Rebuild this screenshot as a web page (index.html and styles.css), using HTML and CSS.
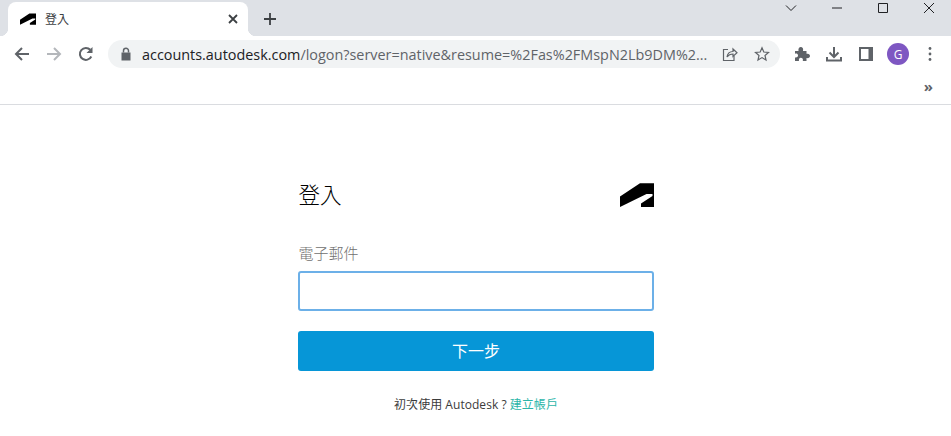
FILE: index.html
```html
<!DOCTYPE html>
<html lang="zh-Hant">
<head>
  <meta charset="UTF-8" />
  <meta name="viewport" content="width=device-width, initial-scale=1" />
  <title>登入</title>
  <link rel="stylesheet" href="styles.css">
</head>
<body>

<header class="browser">
  <div class="tab-strip">
    <div class="tab">
      <svg class="favicon" viewBox="0 0 34 24"><path d="M0 13.5 20 .3H34V24H21V20.5L32.5 13V11H26.5L0 24Z"/></svg>
      <span class="tab-title">登入</span>
      <svg class="tab-close" viewBox="0 0 10 10"><path d="M1 1 9 9M9 1 1 9"/></svg>
    </div>
    <svg class="new-tab" viewBox="0 0 12 12"><path d="M6 0V12M0 6H12"/></svg>
    <div class="window-controls">
      <span class="win-btn"><svg viewBox="0 0 12 12"><path d="M1 3.5 6 8.500 11 3.500"/></svg></span>
      <span class="win-btn"><svg viewBox="0 0 12 12"><path d="M1 6H11"/></svg></span>
      <span class="win-btn"><svg viewBox="0 0 12 12"><path d="M1.500 1.500H10.500V10.500H1.500Z"/></svg></span>
      <span class="win-btn"><svg viewBox="0 0 12 12"><path d="M1 1 11 11M11 1 1 11"/></svg></span>
    </div>
  </div>

  <div class="toolbar">
    <span class="tool"><svg viewBox="0 0 16 16" class="line"><path d="M15 8H2M8 2 2 8 8 14"/></svg></span>
    <span class="tool tool-off"><svg viewBox="0 0 16 16" class="line"><path d="M1 8H14M8 2 14 8 8 14"/></svg></span>
    <span class="tool"><svg viewBox="0 0 16 16" class="line"><path d="M13.300 10.500A6 6 0 1 1 12.300 3.800"/><path class="fill" d="M14.500 1V7H8.500Z"/></svg></span>
    <div class="omnibox">
      <svg class="lock" viewBox="0 0 16 16"><path d="M3.500 6.500H12.500V14.500H3.500Z"/><path class="shackle" d="M5.500 6.500V4.800A2.500 2.500 0 0 1 10.500 4.800V6.500"/></svg>
      <div class="url"><span class="host">accounts.autodesk.com</span>/logon?server=native&amp;resume=%2Fas%2FMspN2Lb9DM%2...</div>
      <span class="tool"><svg viewBox="0 0 16 16" class="line thin"><path d="M6 3.500H1.500V14.500H12V10"/><path d="M5 11C5.500 7.500 8 5.500 11 5.500V3L15 6.800 11 10.500V8C8.500 8 6.500 9 5 11Z"/></svg></span>
      <span class="tool"><svg viewBox="0 0 16 16" class="line thin"><path d="M8 1.800 9.800 6 14.500 6.400 11 9.500 12 14 8 11.600 4 14 5 9.500 1.500 6.400 6.200 6Z"/></svg></span>
    </div>
    <span class="tool"><svg viewBox="0 0 16 16"><path class="fill" d="M1 5H4.500C4 2 5.500 .8 7.200 1 8.800 1.300 9.500 3 9 5H12.500V7.800C14.800 7.300 16 8.500 16 10 15.800 11.800 14.300 12.500 12.500 12V15H8.800C9.300 13 8.300 11.800 6.800 11.800 5.300 11.800 4.500 13.200 5 15H1V11.500C3 11.800 4.200 10.800 4 9.300 3.800 7.800 2.500 7.300 1 7.800Z"/></svg></span>
    <span class="tool"><svg viewBox="0 0 16 16" class="line"><path d="M8 1V10.500M3.500 6.500 8 11 12.500 6.500M1 11V14.500H15V11"/></svg></span>
    <span class="tool"><svg viewBox="0 0 16 16"><path class="fill" fill-rule="evenodd" d="M1 1H15V15H1ZM3 3V13H10.500V3Z"/></svg></span>
    <span class="tool"><span class="avatar">G</span></span>
    <span class="tool"><svg viewBox="0 0 16 16"><circle class="fill" cx="8" cy="2.500" r="1.400"/><circle class="fill" cx="8" cy="8" r="1.400"/><circle class="fill" cx="8" cy="13.500" r="1.400"/></svg></span>
  </div>

  <div class="bookmarks"><span class="more">»</span></div>
</header>

<main class="login">
  <div class="login-head">
    <h1>登入</h1>
    <svg class="logo" viewBox="0 0 34 24"><path d="M0 13.5 20 .3H34V24H21V20.5L32.5 13V11H26.5L0 24Z"/></svg>
  </div>
  <label class="field-label" for="email">電子郵件</label>
  <input class="field-input" type="text" id="email" />
  <button class="btn-next">下一步</button>
  <p class="signup">初次使用 Autodesk ? <a href="#">建立帳戶</a></p>
</main>

</body>
</html>
```

FILE: styles.css
```css
*, *::before, *::after { margin: 0; padding: 0; box-sizing: border-box; }
body {
  font-family: "Open Sans", "Noto Sans CJK TC", sans-serif;
  background: #fff;
  color: #202124;
  overflow: hidden;
}

.browser { border-bottom: 1px solid #dadce0; }

.tab-strip {
  height: 36px;
  background: #dee1e6;
  display: flex;
  padding: 2px 0 0 8px;
}
.tab {
  position: relative;
  width: 240px;
  background: #fff;
  border-radius: 8px 8px 0 0;
  display: flex;
  align-items: center;
  padding: 0 10px 0 12px;
}
.tab::before, .tab::after {
  content: "";
  position: absolute;
  bottom: 0;
  width: 8px;
  height: 8px;
}
.tab::before {
  left: -8px;
  background: radial-gradient(circle at 0 0, #dee1e6 8px, #fff 8.5px);
}
.tab::after {
  right: -8px;
  background: radial-gradient(circle at 100% 0, #dee1e6 8px, #fff 8.5px);
}
.favicon { width: 16px; height: 12px; }
.tab-title {
  flex: 1;
  margin-left: 9px;
  font-size: 12px;
  color: #3c4043;
}
.tab-close {
  width: 10px;
  height: 10px;
  fill: none;
  stroke: #3c4043;
  stroke-width: 1.8;
}
.new-tab {
  width: 12px;
  height: 12px;
  margin: 11px 0 0 16px;
  fill: none;
  stroke: #3c4043;
  stroke-width: 1.8;
}

.window-controls {
  margin: -2px -1px 0 auto;
  display: flex;
  align-items: flex-start;
}
.win-btn {
  width: 46px;
  height: 16px;
  display: flex;
  align-items: center;
  justify-content: center;
}
.win-btn svg {
  width: 12px;
  height: 12px;
  fill: none;
  stroke: #202124;
  stroke-width: 1;
}

.toolbar {
  height: 36px;
  display: flex;
  align-items: center;
  padding: 0 5px 0 6px;
}
.tool {
  width: 32px;
  height: 28px;
  flex: none;
  display: flex;
  align-items: center;
  justify-content: center;
}
.tool svg { width: 16px; height: 16px; }
.fill { fill: #5f6368; stroke: none; }
.line { fill: none; stroke: #5f6368; stroke-width: 2; }
.line.thin { stroke-width: 1.2; }
.tool-off .line { stroke: #b4b7bb; }

.omnibox {
  flex: 1;
  height: 28px;
  margin: 0 6px;
  background: #f1f3f4;
  border-radius: 14px;
  display: flex;
  align-items: center;
  padding: 0 2px 0 10px;
  min-width: 0;
}
.lock { width: 16px; height: 16px; flex: none; fill: #5f6368; }
.lock .shackle { fill: none; stroke: #5f6368; stroke-width: 1.500; }
.url {
  flex: 1;
  min-width: 0;
  margin-left: 8px;
  font-size: 14.4px;
  color: #5f6368;
  white-space: nowrap;
  overflow: hidden;
}
.host { color: #202124; }
.avatar {
  width: 22px;
  height: 22px;
  border-radius: 50%;
  background: #7e57c2;
  color: #fff;
  font-size: 12px;
  display: flex;
  align-items: center;
  justify-content: center;
}

.bookmarks {
  height: 32px;
  display: flex;
  justify-content: flex-end;
  align-items: center;
  padding: 0 18px 4px 0;
}
.more { font-size: 15px; font-weight: 700; color: #5f6368; line-height: 1; }

.login {
  width: 356px;
  margin: 0 auto;
  padding-top: 74px;
}
.login-head {
  display: flex;
  justify-content: space-between;
  align-items: center;
  height: 32px;
  margin-bottom: 33px;
}
.login-head h1 {
  font-size: 21.5px;
  font-weight: 300;
  color: #000;
  padding: 0 0 3px 1px;
}
.logo { width: 34px; height: 24px; }
.field-label {
  display: block;
  font-size: 15px;
  font-weight: 300;
  line-height: 20px;
  color: #707070;
  padding-left: 1px;
  margin: -1px 0 8px;
}
.field-input {
  display: block;
  width: 100%;
  height: 40px;
  border: 2px solid #6cb0e8;
  border-radius: 3px;
  background: #fff;
  outline: none;
}
.btn-next {
  display: block;
  width: 100%;
  height: 40px;
  margin-top: 20px;
  border: none;
  border-radius: 3px;
  background: #0696d7;
  color: #fff;
  font-family: inherit;
  font-size: 16px;
  padding: 0 0 2px 1px;
}
.signup {
  margin-top: 25px;
  text-align: center;
  font-size: 12px;
  letter-spacing: .04px;
  line-height: 18px;
  color: #3c3c3c;
  padding-left: 1px;
}
.signup a { color: #2bb5a8; text-decoration: none; }
```
